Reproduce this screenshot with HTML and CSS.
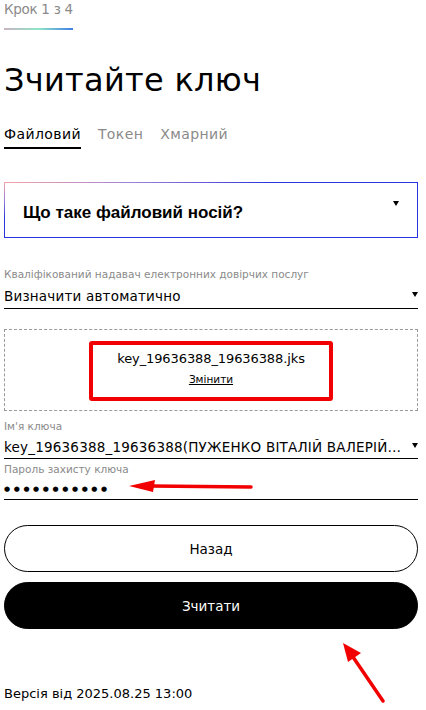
FILE: index.html
```html
<!DOCTYPE html>
<html lang="uk">
<head>
<meta charset="utf-8">
<title>Зчитайте ключ</title>
<link rel="stylesheet" href="styles.css">
</head>
<body>
<div class="page">
  <div class="step">Крок 1 з 4</div>
  <div class="progress"></div>
  <h1 class="title">Зчитайте ключ</h1>
  <div class="tabs">
    <div class="tab active">Файловий</div>
    <div class="tab">Токен</div>
    <div class="tab">Хмарний</div>
  </div>
  <div class="accordion">
    <span class="acc-title">Що таке файловий носій?</span>
    <span class="tri acc-tri"></span>
  </div>
  <div class="field first">
    <div class="label">Кваліфікований надавач електронних довірчих послуг</div>
    <div class="select"><span class="value">Визначити автоматично</span><span class="tri"></span></div>
  </div>
  <div class="dropzone">
    <div class="file-box">
      <div class="filename">key_19636388_19636388.jks</div>
      <a class="change">Змінити</a>
    </div>
  </div>
  <div class="field second">
    <div class="label">Ім'я ключа</div>
    <div class="select"><span class="value">key_19636388_19636388(ПУЖЕНКО ВІТАЛІЙ ВАЛЕРІЙОВИЧ)</span><span class="tri"></span></div>
  </div>
  <div class="field third">
    <div class="label">Пароль захисту ключа</div>
    <div class="password">●●●●●●●●●●●</div>
  </div>
  <div class="buttons">
    <button class="btn outline">Назад</button>
    <button class="btn solid">Зчитати</button>
  </div>
  <div class="version">Версія від 2025.08.25 13:00</div>

  <svg class="arrow arrow-left" width="130" height="16" viewBox="0 0 130 16">
    <path d="M22 8 L122 9" stroke="#f20000" stroke-width="3.5" stroke-linecap="round" fill="none"/>
    <path d="M0 8 L26 2 L24 14 Z" fill="#f20000"/>
  </svg>
  <svg class="arrow arrow-up" width="50" height="64" viewBox="0 0 50 64">
    <path d="M12 16 L42 60" stroke="#f20000" stroke-width="3.5" stroke-linecap="round" fill="none"/>
    <path d="M2 2 L20 12 L7 21 Z" fill="#f20000"/>
  </svg>
</div>
</body>
</html>
```
FILE: styles.css
```css
* { box-sizing: border-box; }
html, body { margin: 0; padding: 0; background: #fff; }
body {
  font-family: "DejaVu Sans", "Noto Sans", sans-serif;
  color: #000;
}
.page {
  position: relative;
  padding: 0 4px;
  width: 422px;
  display: flex;
  flex-direction: column;
}
.step {
  font-size: 13.5px;
  line-height: 16px;
  color: #8a8a8a;
  margin-top: 1px;
  letter-spacing: -0.3px;
}
.progress {
  margin-top: 11px;
  width: 69px;
  height: 2px;
  background: linear-gradient(to right, #c9b3c2 0%, #8fe6c8 50%, #3f7fe8 100%);
}
.title {
  margin: 30px 0 0;
  font-size: 32px;
  line-height: 40px;
  font-weight: 400;
  letter-spacing: 0.3px;
}
.tabs {
  display: flex;
  gap: 17px;
  margin-top: 25px;
}
.tab {
  font-size: 14px;
  line-height: 18px;
  color: #8a8a8a;
  padding-bottom: 4px;
  border-bottom: 2px solid transparent;
  letter-spacing: 0.4px;
}
.tab.active {
  color: #000;
  border-bottom-color: #000;
}
.accordion {
  margin-top: 33px;
  height: 56px;
  border: 1px solid transparent;
  background:
    linear-gradient(#fff, #fff) padding-box,
    radial-gradient(ellipse 100% 100% at 0 0, #f4a6a6 0%, #a383d6 30%, #2a33dd 65%) border-box;
  display: flex;
  align-items: center;
  padding: 0 0 0 18px;
  position: relative;
}
.acc-title {
  font-family: "Liberation Sans", Arial, sans-serif;
  font-size: 17px;
  font-weight: 700;
  margin-top: 6px;
}
.tri {
  width: 0;
  height: 0;
  border-left: 3.5px solid transparent;
  border-right: 3.5px solid transparent;
  border-top: 5px solid #000;
  flex: none;
}
.acc-tri {
  position: absolute;
  right: 18px;
  top: 18px;
}
.field { display: flex; flex-direction: column; }
.field.first { margin-top: 29px; }
.label {
  font-size: 10.5px;
  line-height: 14px;
  color: #8a8a8a;
}
.select {
  display: flex;
  align-items: center;
  gap: 2px;
  height: 28px;
  border-bottom: 1px solid #000;
  padding-top: 2px;
}
.value {
  flex: 1;
  font-size: 13.5px;
  white-space: nowrap;
  overflow: hidden;
  text-overflow: ellipsis;
  letter-spacing: 0.2px;
}
.select .tri { margin-top: -2px; }
.dropzone {
  margin-top: 20px;
  height: 82px;
  border: 1px dashed #9a9a9a;
  display: flex;
  justify-content: center;
  padding-top: 11px;
}
.file-box {
  width: 244px;
  height: 60px;
  border: 4px solid #f20000;
  border-radius: 3px;
  display: flex;
  flex-direction: column;
  align-items: center;
  padding-top: 4px;
}
.filename {
  font-size: 13px;
  line-height: 20px;
  letter-spacing: -0.1px;
}
.change {
  margin-top: 3px;
  font-size: 10.5px;
  line-height: 14px;
  text-decoration: underline;
  color: #000;
}
.field.second { margin-top: 8px; }
.field.second .select { height: 26px; }
.field.third { margin-top: 3px; }
.password {
  height: 24px;
  border-bottom: 1px solid #000;
  font-size: 7px;
  letter-spacing: 3.6px;
  display: flex;
  align-items: center;
  padding-top: 2px;
}
.buttons {
  margin-top: 25px;
  display: flex;
  flex-direction: column;
  gap: 10px;
}
.btn {
  height: 47px;
  border-radius: 24px;
  font-family: inherit;
  font-size: 13.5px;
  font-weight: 500;
  width: 100%;
}
.btn.outline { background: #fff; border: 1px solid #000; color: #000; }
.btn.solid { background: #000; border: 1px solid #000; color: #fff; }
.version {
  margin-top: 56px;
  font-size: 13px;
  line-height: 18px;
}
.arrow { position: absolute; }
.arrow-left { left: 129px; top: 478px; }
.arrow-up { left: 341px; top: 641px; }
```
